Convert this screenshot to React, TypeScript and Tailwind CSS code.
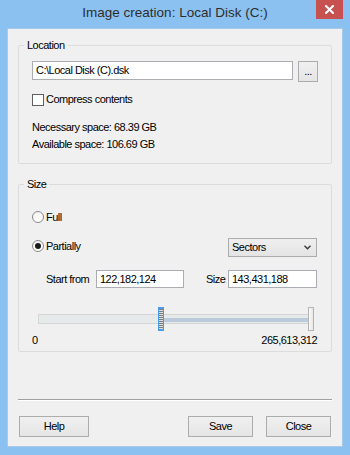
import React from "react";

function Radio({ checked }: { checked?: boolean }) {
  return (
    <span className="w-[12px] h-[12px] rounded-full border border-[#8a8a8a] bg-gradient-to-b from-[#f4f4f4] to-[#ffffff] flex items-center justify-center shrink-0">
      {checked && <span className="w-[6px] h-[6px] rounded-full bg-[#1a1a1a]" />}
    </span>
  );
}

function Button({ label, className }: { label: string; className?: string }) {
  return (
    <button
      className={
        "h-[21px] border border-[#acacac] bg-gradient-to-b from-[#f0f0f0] to-[#e5e5e5] text-[11px] text-black leading-none " +
        (className ?? "")
      }
    >
      {label}
    </button>
  );
}

export default function App() {
  return (
    <div className="w-[350px] h-[455px] bg-[#8bc1f0] flex flex-col font-['Liberation_Sans',Arial,sans-serif] text-[11px] tracking-[-0.5px] text-black select-none">
      {/* title bar */}
      <div className="relative h-[28px] flex items-center justify-center">
        <span className="text-[13.5px] tracking-normal text-[#2e2e2e] -mt-[1px]">Image creation: Local Disk (C:)</span>
        <div className="absolute right-[7px] top-0 w-[27px] h-[19px] bg-[#c75050] flex items-center justify-center">
          <svg width="9" height="9" viewBox="0 0 9 9">
            <path d="M1 1 L8 8 M8 1 L1 8" stroke="#ffffff" strokeWidth="2" strokeLinecap="square" />
          </svg>
        </div>
      </div>

      {/* client area */}
      <div className="flex-1 mx-[7px] mb-[8px] bg-[#f0f0f0] border border-[#a8c9e9] flex flex-col px-[10px]">
        <fieldset className="mt-[9px] border border-[#dcdcdc] rounded-[2px] pl-[13px] pr-[13px] pb-[11px]">
          <legend className="-ml-[8px] px-[3px] leading-[14px]">Location</legend>
          <div className="mt-[9px] flex gap-[5px] h-[19px]">
            <div className="w-[261px] h-[19px] bg-white border border-[#abadb3] px-[3px] flex items-center">
              C:\Local Disk (C).dsk
            </div>
            <Button label="..." className="w-[20px] h-[19px]" />
          </div>
          <div className="mt-[13px] h-[13px] flex items-center gap-[2px]">
            <span className="w-[12px] h-[12px] border border-[#5f5f5f] bg-white shrink-0" />
            <span>Compress contents</span>
          </div>
          <div className="mt-[13px] leading-[16.5px]">
            <div>Necessary space: 68.39 GB</div>
            <div>Available space: 106.69 GB</div>
          </div>
        </fieldset>

        <fieldset className="mt-[13px] border border-[#dcdcdc] rounded-[2px] pl-[13px] pr-[14px] pb-[4px]">
          <legend className="-ml-[8px] px-[3px] leading-[14px]">Size</legend>
          <div className="mt-[19px] h-[14px] flex items-center gap-[2px]">
            <Radio />
            <span>Full</span>
          </div>
          <div className="mt-[14px] h-[19px] flex justify-between items-start">
            <div className="mt-[1px] h-[14px] flex items-center gap-[2px]">
              <Radio checked />
              <span>Partially</span>
            </div>
            <div className="w-[89px] h-[19px] border border-[#acacac] bg-gradient-to-b from-[#efefef] to-[#e4e4e4] flex items-center justify-between pl-[3px] pr-[5px]">
              <span>Sectors</span>
              <svg width="7" height="5" viewBox="0 0 7 5">
                <path d="M0.5 0.8 L3.5 3.8 L6.5 0.8" stroke="#333" strokeWidth="1.3" fill="none" />
              </svg>
            </div>
          </div>
          <div className="mt-[13px] h-[18px] flex items-center pl-[14px]">
            <span className="w-[50px]">Start from</span>
            <div className="w-[88px] h-[18px] bg-white border border-[#abadb3] px-[3px] flex items-center">
              122,182,124
            </div>
            <span className="ml-[22px] w-[22px]">Size</span>
            <div className="w-[89px] h-[18px] bg-white border border-[#abadb3] px-[3px] flex items-center">
              143,431,188
            </div>
          </div>

          {/* range slider */}
          <div className="mt-[19px] ml-[6px] w-[276px] h-[24px] relative">
            <div className="absolute left-0 right-[1px] top-[7px] h-[10px] bg-[#e7eaea] border border-[#d4d6d6]" />
            <div className="absolute left-[125px] right-[6px] top-[11px] h-[4px] bg-[#bccbdc]" />
            <div className="absolute left-[120px] top-0 w-[6px] h-[24px] border-x border-y-2 border-[#4b9cec] bg-[repeating-linear-gradient(to_bottom,#7c7c7c_0px,#7c7c7c_1px,#dedede_1px,#dedede_2px)]" />
            <div className="absolute left-[270px] top-0 w-[6px] h-[24px] border border-[#b4b4b4] bg-gradient-to-r from-[#fafafa] to-[#e6e6e6]" />
          </div>
          <div className="mt-[2px] flex justify-between leading-[14px]">
            <span>0</span>
            <span>265,613,312</span>
          </div>
        </fieldset>

        <div className="mt-[47px] h-[2px] border-t border-[#a0a0a0] border-b border-b-white" />

        <div className="mt-[15px] flex">
          <Button label="Help" className="ml-[1px] w-[70px]" />
          <Button label="Save" className="ml-auto w-[65px]" />
          <Button label="Close" className="ml-[13px] mr-[1px] w-[65px]" />
        </div>
      </div>
    </div>
  );
}
